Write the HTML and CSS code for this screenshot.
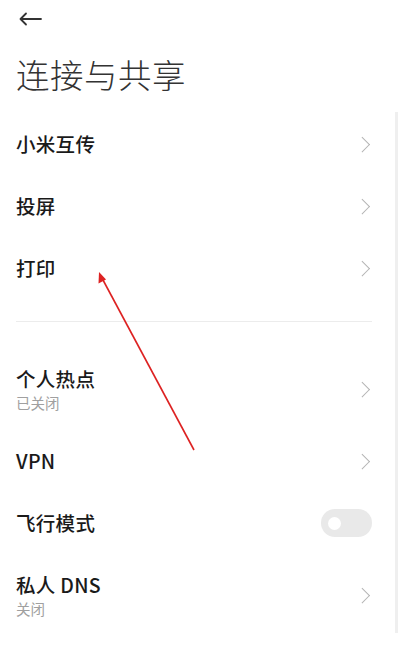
FILE: index.html
```html
<!DOCTYPE html>
<html lang="zh-CN">
<head>
<meta charset="utf-8">
<title>连接与共享</title>
<link rel="stylesheet" href="styles.css">
</head>
<body>
<div class="page">
  <div class="topbar">
    <svg class="back" width="24" height="14" viewBox="0 0 24 14"><path d="M23 7H2.5M8 1.5L2.5 7L8 12.5" fill="none" stroke="#333" stroke-width="1.8" stroke-linecap="round" stroke-linejoin="round"/></svg>
  </div>
  <h1 class="title">连接与共享</h1>

  <div class="list">
    <div class="row"><div class="label"><div class="name">小米互传</div></div><span class="chev"></span></div>
    <div class="row"><div class="label"><div class="name">投屏</div></div><span class="chev"></span></div>
    <div class="row"><div class="label"><div class="name">打印</div></div><span class="chev"></span></div>
  </div>

  <div class="divider"></div>

  <div class="list">
    <div class="row tall"><div class="label"><div class="name">个人热点</div><div class="sub">已关闭</div></div><span class="chev"></span></div>
    <div class="row"><div class="label"><div class="name">VPN</div></div><span class="chev"></span></div>
    <div class="row"><div class="label"><div class="name">飞行模式</div></div><span class="toggle"><span class="knob"></span></span></div>
    <div class="row tall"><div class="label"><div class="name">私人 DNS</div><div class="sub">关闭</div></div><span class="chev"></span></div>
  </div>

  <div class="scrollbar"></div>
  <svg class="annot" width="400" height="645" viewBox="0 0 400 645">
    <line x1="194" y1="450" x2="103" y2="280" stroke="#dd2222" stroke-width="1.6"/>
    <polygon points="99,272 98.5,283.5 106,279.5" fill="#dd2222"/>
  </svg>
</div>
</body>
</html>
```
FILE: styles.css
```css
html, body {
  margin: 0;
  padding: 0;
  background: #ffffff;
}
body {
  font-family: "Noto Sans CJK SC", "Noto Sans", sans-serif;
  color: #1a1a1a;
}
.page {
  position: relative;
  width: 400px;
  height: 645px;
  overflow: hidden;
}
.topbar {
  height: 38px;
  display: flex;
  align-items: center;
  padding-left: 18px;
}
.back {
  display: block;
}
.title {
  margin: 13px 0 16px 16px;
  font-size: 33.5px;
  line-height: 46px;
  font-weight: 300;
  color: #333333;
  letter-spacing: 0.5px;
}
.list {
  display: flex;
  flex-direction: column;
}
.row {
  height: 62px;
  display: flex;
  align-items: center;
  justify-content: space-between;
  padding: 0 29px 0 16px;
}
.row.tall {
  height: 82px;
}
.name {
  font-size: 19.5px;
  line-height: 26px;
  font-weight: 500;
  color: #1a1a1a;
  letter-spacing: 0.3px;
}
.sub {
  font-size: 14.5px;
  line-height: 20px;
  color: #a0a0a0;
  margin-top: 1px;
}
.chev {
  width: 9.5px;
  height: 9.5px;
  border-right: 1.4px solid #b3b3b3;
  border-top: 1.4px solid #b3b3b3;
  transform: rotate(45deg);
  margin-right: 4px;
}
.divider {
  height: 1px;
  background: #ececec;
  margin: 22px 28px 26px 16px;
}
.toggle {
  width: 51px;
  height: 28px;
  border-radius: 14px;
  background: #e9e9e9;
  display: flex;
  align-items: center;
  padding-left: 7px;
  box-sizing: border-box;
  margin-right: -1px;
}
.knob {
  width: 13px;
  height: 13px;
  border-radius: 50%;
  background: #ffffff;
}
.scrollbar {
  position: absolute;
  left: 395px;
  top: 112px;
  width: 3px;
  height: 521px;
  background: #efefef;
}
.annot {
  position: absolute;
  left: 0;
  top: 0;
  pointer-events: none;
}
```
